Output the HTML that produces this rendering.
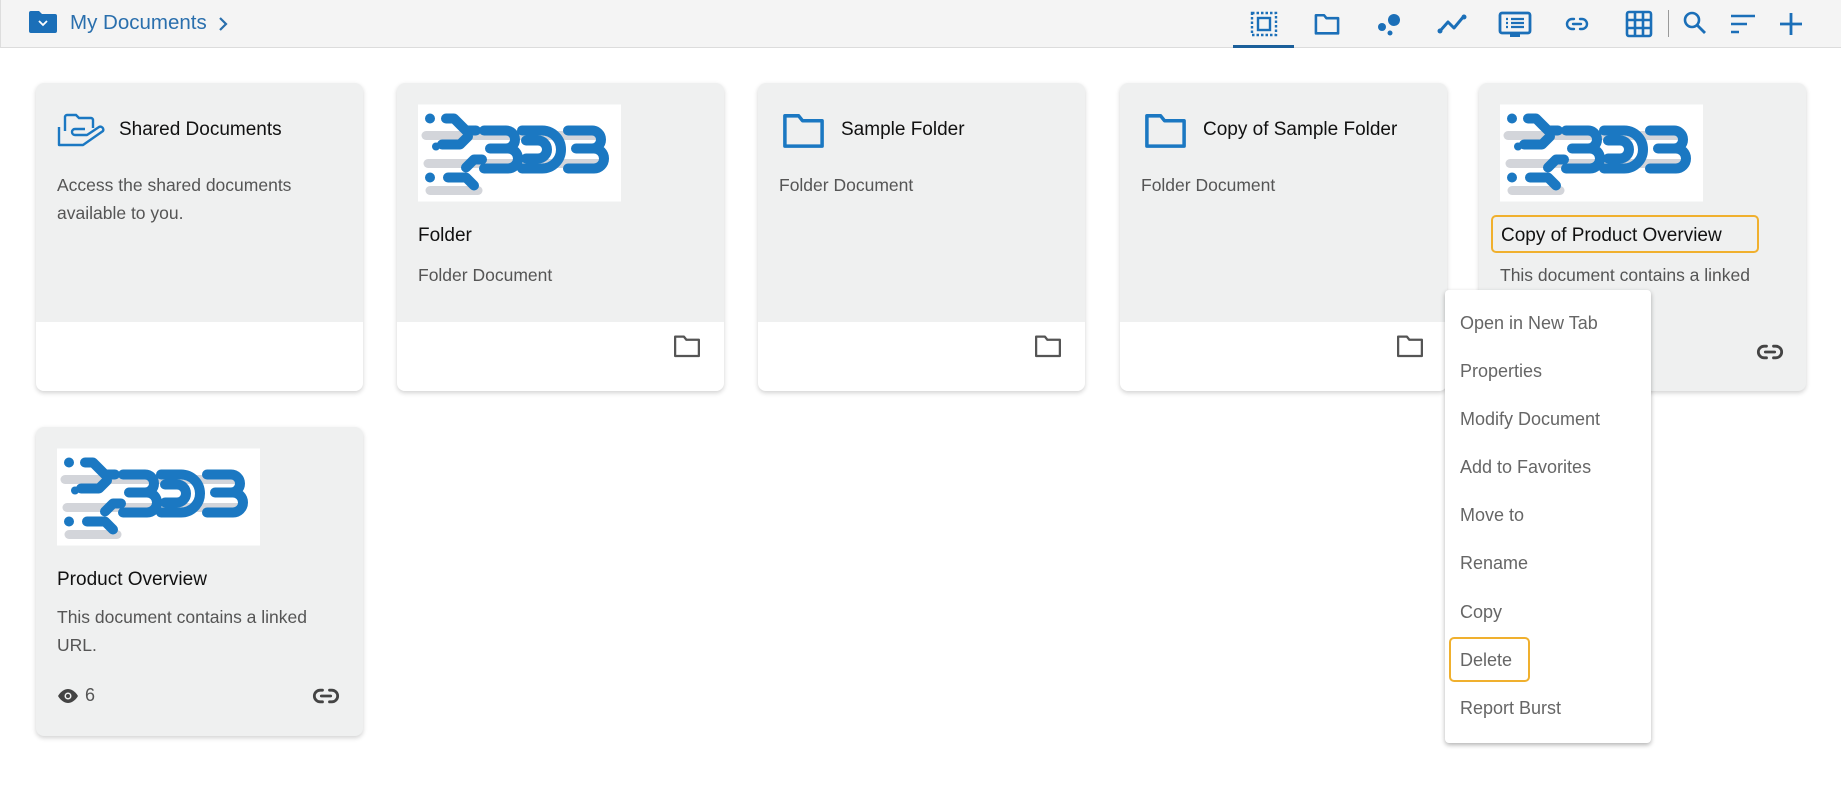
<!DOCTYPE html>
<html><head><meta charset="utf-8"><style>
*{margin:0;padding:0;box-sizing:border-box}
body{width:1841px;height:794px;background:#fff;font-family:"Liberation Sans",sans-serif;position:relative;overflow:hidden}
.hdr{position:absolute;left:0;top:0;width:1841px;height:48px;background:#f4f4f4;border-bottom:1px solid #dcdcdc;border-left:1px solid #ddd}
.abs{position:absolute}
.card{position:absolute;width:327px;background:#eff0f0;border-radius:8px;box-shadow:0 2px 5px rgba(0,0,0,.18);overflow:hidden}
.foot{position:absolute;left:0;right:0;bottom:0;height:69px;background:#fff}
.t{position:absolute;font-size:19px;color:#111;white-space:nowrap}
.d{position:absolute;font-size:17.5px;color:#555;line-height:28px;white-space:nowrap}
.menu{position:absolute;left:1445px;top:290px;width:206px;height:453px;background:#fff;border-radius:4px;box-shadow:0 2px 5px rgba(0,0,0,.3)}
.mi{position:absolute;left:15px;font-size:18px;color:#666;white-space:nowrap}
</style></head><body>
<svg width="0" height="0" style="position:absolute"><defs>
<symbol id="logo" viewBox="0 0 203 97">
<rect width="203" height="97" fill="#fff"/>
<g stroke="#d3d5da" stroke-width="9" stroke-linecap="round">
<line x1="8" y1="31" x2="180" y2="31"/><line x1="10" y1="59" x2="180" y2="59"/><line x1="12" y1="86" x2="60" y2="86"/>
</g>
<g fill="none" stroke="#1b78c2" stroke-width="10" stroke-linecap="round" stroke-linejoin="round">
<path d="M28 14h8l12 12h10"/><path d="M24 40h18l8-8"/><path d="M30 73h18l8 8"/><path d="M48 63l8-8h8"/>
<path d="M66 26h22a9 9 0 0 1 0 18h-14M72 44h18a10 10 0 0 1 0 20h-24"/>
<path d="M104 26h20a19 19 0 0 1 0 38h-20M108 36h12a9 9 0 0 1 0 18h-12"/>
<path d="M150 26h24a9 9 0 0 1 0 18h-14M158 44h18a10 10 0 0 1 0 20h-26"/>
</g>
<g fill="#1b78c2"><circle cx="12" cy="14" r="5"/><circle cx="18" cy="42" r="4"/><circle cx="12" cy="73" r="5"/></g>
</symbol>
<symbol id="fold" viewBox="0 0 24 24"><path d="M2.5 4.5h7l2 2.5h10v13h-19z" fill="none" stroke="currentColor" stroke-width="1.8" stroke-linejoin="round"/></symbol>
<symbol id="link" viewBox="0 0 24 24"><path d="M9 7H7a5 5 0 0 0 0 10h2M15 7h2a5 5 0 0 1 0 10h-2M8 12h8" fill="none" stroke="currentColor" stroke-width="2.4" stroke-linecap="round"/></symbol>
</defs></svg>

<div class="hdr"></div>
<svg class="abs" style="left:29px;top:11px" width="28" height="22" viewBox="0 0 28 22"><path d="M0 2a2 2 0 0 1 2-2h8l3 3h13a2 2 0 0 1 2 2v15a2 2 0 0 1-2 2H2a2 2 0 0 1-2-2z" fill="#1b6fb8"/><path d="M10 10l4 4 4-4" stroke="#fff" stroke-width="1.8" fill="none"/></svg>
<div class="abs" style="left:70px;top:11px;font-size:20.5px;color:#2a6fad">My Documents</div>
<svg class="abs" style="left:217px;top:16px" width="12" height="16"><path d="M3 2l6 6-6 6" stroke="#2a6fad" stroke-width="2.2" fill="none"/></svg>

<!-- toolbar -->
<svg class="abs" style="left:1250px;top:11px" width="28" height="26" viewBox="0 0 28 26"><rect x="2" y="2" width="24" height="22" fill="none" stroke="#1b6fb8" stroke-width="2.4" stroke-dasharray="2.5 2"/><rect x="8" y="7" width="12" height="12" fill="none" stroke="#1b6fb8" stroke-width="2.4"/></svg>
<div class="abs" style="left:1233px;top:45px;width:61px;height:3px;background:#1b5f9a"></div>
<svg class="abs" style="left:1312px;top:10px" width="30" height="28" viewBox="0 0 24 24"><path d="M2.5 4.5h7l2 2.5h10v13h-19z" fill="none" stroke="#1b6fb8" stroke-width="2.2" stroke-linejoin="round"/></svg>
<svg class="abs" style="left:1375px;top:12px" width="28" height="24"><circle cx="19" cy="8" r="6" fill="#1b6fb8"/><circle cx="7" cy="15" r="4" fill="#1b6fb8"/><circle cx="15" cy="21" r="2.5" fill="#1b6fb8"/></svg>
<svg class="abs" style="left:1437px;top:13px" width="30" height="22"><path d="M3 18l8-9 6 6 10-12" stroke="#1b6fb8" stroke-width="3" fill="none" stroke-linejoin="round"/><circle cx="3" cy="18" r="2.5" fill="#1b6fb8"/><circle cx="27" cy="4" r="2.5" fill="#1b6fb8"/></svg>
<svg class="abs" style="left:1498px;top:11px" width="34" height="28"><rect x="2" y="2" width="30" height="20" rx="2" fill="none" stroke="#1b6fb8" stroke-width="2.8"/><path d="M8 8h2M13 8h13M8 12h2M13 12h13M8 16h2M13 16h13" stroke="#1b6fb8" stroke-width="2.2"/><rect x="12" y="22" width="10" height="4" fill="#1b6fb8"/></svg>
<svg class="abs" style="left:1563px;top:12px" width="28" height="24" viewBox="0 0 24 24"><path d="M9 7H7a5 5 0 0 0 0 10h2M15 7h2a5 5 0 0 1 0 10h-2M8 12h8" fill="none" stroke="#1b6fb8" stroke-width="2.4" stroke-linecap="round"/></svg>
<svg class="abs" style="left:1625px;top:10px" width="28" height="28"><rect x="2" y="2" width="24" height="24" rx="2" fill="none" stroke="#1b6fb8" stroke-width="2.6"/><path d="M10 2v24M18 2v24M2 10h24M2 18h24" stroke="#1b6fb8" stroke-width="2.6"/></svg>
<div class="abs" style="left:1668px;top:10px;width:1px;height:27px;background:#999"></div>
<svg class="abs" style="left:1682px;top:10px" width="26" height="26"><circle cx="10" cy="10" r="7" fill="none" stroke="#1b6fb8" stroke-width="2.6"/><path d="M15 15l8 8" stroke="#1b6fb8" stroke-width="2.8"/></svg>
<svg class="abs" style="left:1730px;top:13px" width="26" height="22"><path d="M1 3h24M1 11h16M1 19h8" stroke="#1b6fb8" stroke-width="2.6"/></svg>
<svg class="abs" style="left:1779px;top:12px" width="24" height="24"><path d="M12 1v22M1 12h22" stroke="#1b6fb8" stroke-width="2.8"/></svg>

<!-- card 1 -->
<div class="card" style="left:36px;top:83px;height:308px"><div class="foot"></div>
<svg class="abs" style="left:21px;top:30px" width="49" height="34" viewBox="0 0 49 34"><path d="M8 18V4a2 2 0 0 1 2-2h9l3 3h12a2 2 0 0 1 2 2v8" fill="none" stroke="#1b78c2" stroke-width="2.4"/><path d="M2 14v18h24l20-14a3 3 0 0 0-4-4l-12 8H18a3 3 0 0 1 0-6h10" fill="none" stroke="#1b78c2" stroke-width="2.4" stroke-linejoin="round"/></svg>
<div class="t" style="left:83px;top:36px">Shared Documents</div>
<div class="d" style="left:21px;top:88px">Access the shared documents<br>available to you.</div></div>

<!-- card 2 -->
<div class="card" style="left:397px;top:83px;height:308px"><div class="foot"></div>
<svg class="abs" style="left:21px;top:20px" width="203" height="100"><use href="#logo"/></svg>
<div class="t" style="left:21px;top:142px">Folder</div>
<div class="d" style="left:21px;top:178px">Folder Document</div>
<svg class="abs" style="left:274px;top:248px;color:#555" width="32" height="30"><use href="#fold"/></svg></div>

<!-- card 3 -->
<div class="card" style="left:758px;top:83px;height:308px"><div class="foot"></div>
<svg class="abs" style="left:18px;top:24px;color:#1b78c2" width="55" height="47"><use href="#fold"/></svg>
<div class="t" style="left:83px;top:36px">Sample Folder</div>
<div class="d" style="left:21px;top:88px">Folder Document</div>
<svg class="abs" style="left:274px;top:248px;color:#555" width="32" height="30"><use href="#fold"/></svg></div>

<!-- card 4 -->
<div class="card" style="left:1120px;top:83px;height:308px"><div class="foot"></div>
<svg class="abs" style="left:18px;top:24px;color:#1b78c2" width="55" height="47"><use href="#fold"/></svg>
<div class="t" style="left:83px;top:36px">Copy of Sample Folder</div>
<div class="d" style="left:21px;top:88px">Folder Document</div>
<svg class="abs" style="left:274px;top:248px;color:#555" width="32" height="30"><use href="#fold"/></svg></div>

<!-- card 5 -->
<div class="card" style="left:1479px;top:83px;height:308px">
<svg class="abs" style="left:21px;top:20px" width="203" height="100"><use href="#logo"/></svg>
<div class="abs" style="left:12px;top:132px;width:268px;height:38px;border:2px solid #f0b02e;border-radius:5px"></div>
<div class="t" style="left:22px;top:142px">Copy of Product Overview</div>
<div class="d" style="left:21px;top:178px">This document contains a linked</div>
<svg class="abs" style="left:276px;top:255px;color:#444" width="30" height="28"><use href="#link"/></svg></div>

<!-- card 6 -->
<div class="card" style="left:36px;top:427px;height:309px">
<svg class="abs" style="left:21px;top:20px" width="203" height="100"><use href="#logo"/></svg>
<div class="t" style="left:21px;top:142px">Product Overview</div>
<div class="d" style="left:21px;top:176px">This document contains a linked<br>URL.</div>
<svg class="abs" style="left:21px;top:261px" width="22" height="16"><path d="M1 8C4 3 8 1 11 1s7 2 10 7c-3 5-7 7-10 7S4 13 1 8z" fill="#444"/><circle cx="11" cy="8" r="3.5" fill="#eff0f0"/><circle cx="11" cy="8" r="2" fill="#444"/></svg>
<div class="abs" style="left:49px;top:258px;font-size:18px;color:#555">6</div>
<svg class="abs" style="left:275px;top:255px;color:#444" width="30" height="28"><use href="#link"/></svg></div>

<!-- menu -->
<div class="menu">
<div class="mi" style="top:23px">Open in New Tab</div>
<div class="mi" style="top:71px">Properties</div>
<div class="mi" style="top:119px">Modify Document</div>
<div class="mi" style="top:167px">Add to Favorites</div>
<div class="mi" style="top:215px">Move to</div>
<div class="mi" style="top:263px">Rename</div>
<div class="mi" style="top:312px">Copy</div>
<div class="abs" style="left:4px;top:347px;width:81px;height:45px;border:2px solid #f0b02e;border-radius:5px"></div>
<div class="mi" style="top:360px">Delete</div>
<div class="mi" style="top:408px">Report Burst</div>
</div>
</body></html>
